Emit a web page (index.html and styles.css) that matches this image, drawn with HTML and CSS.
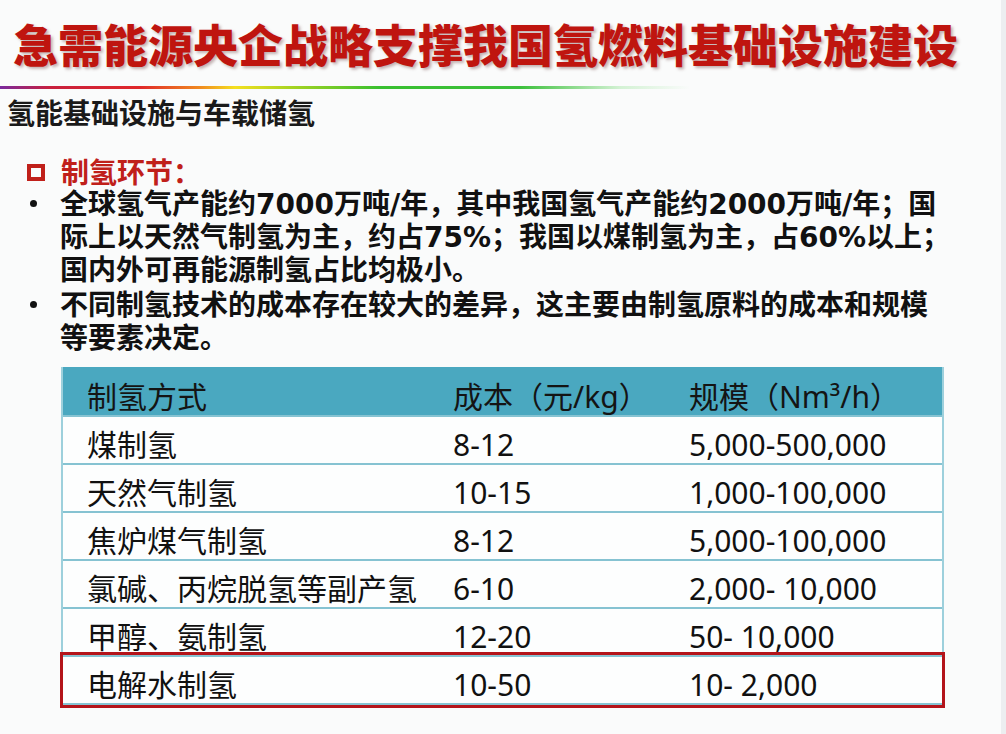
FILE: index.html
```html
<!DOCTYPE html>
<html lang="zh-CN">
<head>
<meta charset="utf-8">
<title>急需能源央企战略支撑我国氢燃料基础设施建设</title>
<link rel="stylesheet" href="styles.css">
</head>
<body>
<div class="slide">
  <h1 class="title">急需能源央企战略支撑我国氢燃料基础设施建设</h1>
  <div class="rule"></div>
  <h2 class="subtitle">氢能基础设施与车载储氢</h2>
  <div class="content">
    <div class="heading"><span class="sq"></span><span>制氢环节：</span></div>
    <ul class="bullets">
      <li><span class="dot"></span><p>全球氢气产能约7000万吨/年，其中我国氢气产能约2000万吨/年；国<br>际上以天然气制氢为主，约占75%；我国以煤制氢为主，占60%以上；<br>国内外可再能源制氢占比均极小。</p></li>
      <li><span class="dot"></span><p>不同制氢技术的成本存在较大的差异，这主要由制氢原料的成本和规模<br>等要素决定。</p></li>
    </ul>
  </div>
  <div class="table">
    <div class="row head"><span>制氢方式</span><span>成本（元/kg）</span><span>规模（Nm³/h）</span></div>
    <div class="row"><span>煤制氢</span><span>8-12</span><span>5,000-500,000</span></div>
    <div class="row"><span>天然气制氢</span><span>10-15</span><span>1,000-100,000</span></div>
    <div class="row"><span>焦炉煤气制氢</span><span>8-12</span><span>5,000-100,000</span></div>
    <div class="row"><span>氯碱、丙烷脱氢等副产氢</span><span>6-10</span><span>2,000- 10,000</span></div>
    <div class="row"><span>甲醇、氨制氢</span><span>12-20</span><span>50- 10,000</span></div>
    <div class="row mark"><span>电解水制氢</span><span>10-50</span><span>10- 2,000</span></div>
  </div>
</div>
</body>
</html>
```
FILE: styles.css
```css
* { box-sizing: border-box; }
html, body { margin: 0; padding: 0; }
body {
  background: #fafbfb;
  font-family: "Noto Sans CJK SC", "Noto Sans", sans-serif;
  color: #111;
}
.slide {
  width: 1006px;
  height: 734px;
  overflow: hidden;
  border-right: 5px solid #eceef0;
}
.title {
  margin: 19px 0 0 0;
  padding-left: 13px;
  font-size: 45px;
  line-height: 50px;
  font-weight: 900;
  color: #bf150f;
  white-space: nowrap;
  text-shadow: 2px 2px 3px rgba(90, 40, 40, 0.35);
}
.rule {
  margin-top: 17px;
  height: 3px;
  width: 690px;
  background: linear-gradient(to right,
    #7a2a9e 0px, #c8203e 50px, #e0282a 140px, #f08a20 200px,
    #f4e020 235px, #a8d422 290px, #38c030 380px, #3cc03c 520px,
    rgba(120, 220, 120, 0.3) 620px, rgba(255, 255, 255, 0) 690px);
}
.subtitle {
  margin: 7px 0 0 0;
  padding-left: 7px;
  font-size: 28px;
  line-height: 32px;
  font-weight: 700;
  color: #1a1a1a;
}
.content {
  margin-top: 27px;
  font-family: "DejaVu Sans", "Noto Sans CJK SC", sans-serif;
  font-size: 28px;
  line-height: 33px;
  font-weight: 700;
}
.heading {
  display: flex;
  align-items: center;
  color: #c0201a;
  font-family: "Noto Sans CJK SC", sans-serif;
}
.sq {
  width: 18px;
  height: 17px;
  border: 4px solid #c0201a;
  margin: 2px 16px 0 27px;
}
.bullets {
  list-style: none;
  margin: 0;
  padding: 0;
}
.bullets li {
  display: flex;
  margin-bottom: 2px;
}
.dot {
  flex: 0 0 7px;
  width: 7px;
  height: 7px;
  border-radius: 50%;
  background: #111;
  margin: 12px 23px 0 30px;
}
.bullets p { margin: 0; }
.table {
  margin: 12px 0 0 61px;
  width: 883px;
  display: flex;
  flex-direction: column;
  border-left: 2px solid #9dd0dc;
  border-right: 2px solid #9dd0dc;
  background: #fdfefe;
  font-family: "Noto Sans", "Noto Sans CJK SC", sans-serif;
  font-size: 30px;
  font-weight: 400;
  color: #111;
}
.row {
  display: grid;
  grid-template-columns: 364px 236px 1fr;
  height: 48px;
  padding: 10px 0 0 24px;
  line-height: 36px;
  border-top: 2px solid #86c3d2;
  white-space: nowrap;
}
.row span:nth-child(n+2) { padding-left: 2px; }
.head {
  background: #4aa8c0;
  border-top: none;
  padding-top: 11px;
  line-height: 37px;
  color: #141414;
}
.mark {
  height: 50px;
  border-bottom: 2px solid #86c3d2;
  outline: 3px solid #b3141a;
  outline-offset: 0px;
}
```
